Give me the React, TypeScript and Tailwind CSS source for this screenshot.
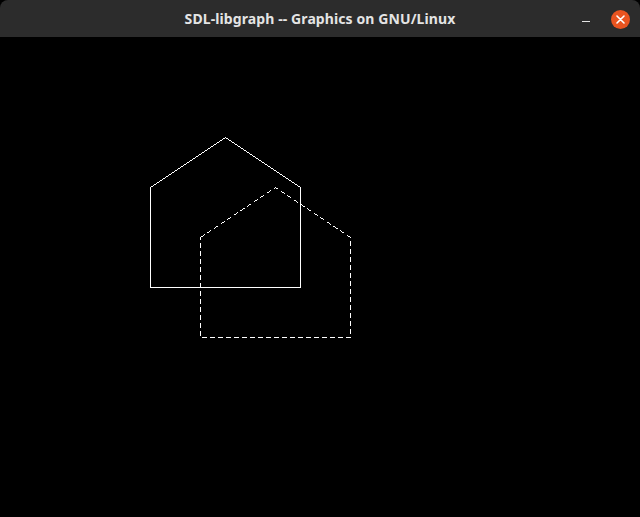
import React from 'react';

// window title bar
const TitleBar = () => (
  <div className="relative h-[37px] bg-[#2c2c2c] rounded-t-[8px] flex items-center justify-center">
    <span className="text-[14px] font-bold text-[#e4e4e4] tracking-[0.1px]" style={{ fontFamily: '"Noto Sans", "Open Sans", sans-serif' }}>
      SDL-libgraph -- Graphics on GNU/Linux
    </span>
    <div className="absolute left-[582px] top-[21px] w-[8px] h-[1px] bg-[#e4e4e4]" />
    <div className="absolute left-[611px] top-[10px] w-[19px] h-[19px] rounded-full bg-[#e95420] flex items-center justify-center">
      <svg width="9" height="9" viewBox="0 0 9 9">
        <path d="M1 1 L8 8 M8 1 L1 8" stroke="#ffffff" strokeWidth="1.6" strokeLinecap="round" />
      </svg>
    </div>
  </div>
);

const House = ({ x, y, dashed }: { x: number; y: number; dashed?: boolean }) => {
  // x,y = top-left of the wall box (pixel coords in the canvas)
  const l = x + 0.5;
  const r = x + 150.5;
  const mid = x + 75.5;
  const apex = y - 50 + 0.5;
  const sh = y + 0.5;
  const bot = y + 100.5;
  return (
    <polygon
      points={`${l},${sh} ${mid},${apex} ${r},${sh} ${r},${bot} ${l},${bot}`}
      fill="none"
      stroke="#ffffff"
      strokeWidth="1"
      strokeDasharray={dashed ? '5 3' : undefined}
    />
  );
};

const App = () => (
  <div className="w-[640px] h-[517px] bg-black flex flex-col overflow-hidden">
    <TitleBar />
    <div className="flex-1 bg-black">
      <svg width="640" height="480" viewBox="0 0 640 480" shapeRendering="crispEdges">
        <House x={150} y={150} />
        <House x={200} y={200} dashed />
      </svg>
    </div>
  </div>
);

export default App;
